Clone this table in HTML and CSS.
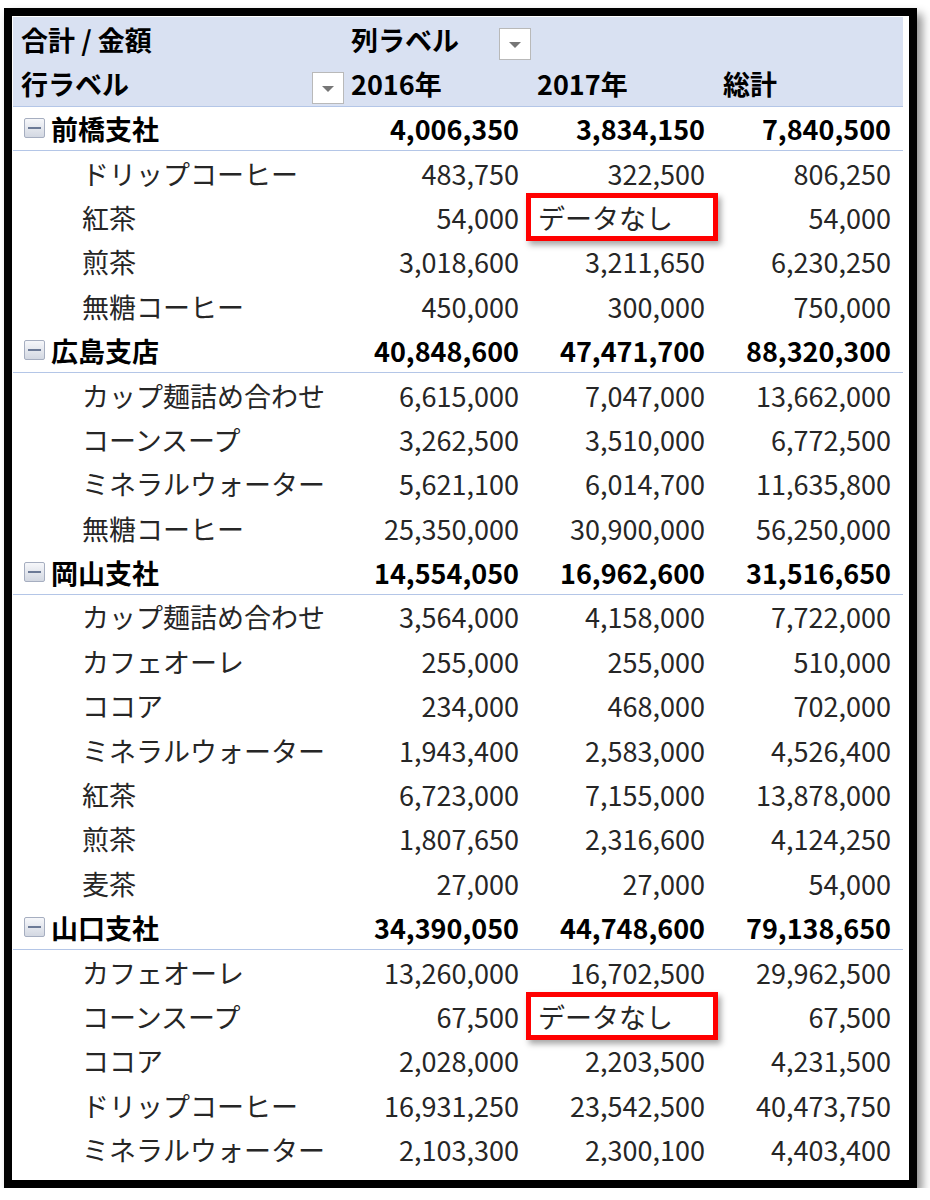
FILE: index.html
```html
<!DOCTYPE html>
<html lang="ja">
<head>
<meta charset="utf-8">
<title>ピボットテーブル</title>
<link rel="stylesheet" href="styles.css">
</head>
<body>
<div class="frame">
  <div class="pivot">
    <div class="row head">
      <div class="cell label hl">合計&nbsp;/&nbsp;金額</div>
      <div class="cell hl collabel">列ラベル<span class="dd"><i></i></span></div>
      <div class="cell"></div>
      <div class="cell"></div>
    </div>
    <div class="row head last-head">
      <div class="cell label hl rowlabel">行ラベル<span class="dd"><i></i></span></div>
      <div class="cell hl">2016年</div>
      <div class="cell hl">2017年</div>
      <div class="cell hl">総計</div>
    </div>

    <div class="row group">
      <div class="cell label"><span class="minus"></span>前橋支社</div>
      <div class="cell num">4,006,350</div><div class="cell num">3,834,150</div><div class="cell num">7,840,500</div>
    </div>
    <div class="row item"><div class="cell label">ドリップコーヒー</div><div class="cell num">483,750</div><div class="cell num">322,500</div><div class="cell num">806,250</div></div>
    <div class="row item"><div class="cell label">紅茶</div><div class="cell num">54,000</div><div class="cell nodata">データなし<span class="mark"></span></div><div class="cell num">54,000</div></div>
    <div class="row item"><div class="cell label">煎茶</div><div class="cell num">3,018,600</div><div class="cell num">3,211,650</div><div class="cell num">6,230,250</div></div>
    <div class="row item"><div class="cell label">無糖コーヒー</div><div class="cell num">450,000</div><div class="cell num">300,000</div><div class="cell num">750,000</div></div>

    <div class="row group">
      <div class="cell label"><span class="minus"></span>広島支店</div>
      <div class="cell num">40,848,600</div><div class="cell num">47,471,700</div><div class="cell num">88,320,300</div>
    </div>
    <div class="row item"><div class="cell label">カップ麺詰め合わせ</div><div class="cell num">6,615,000</div><div class="cell num">7,047,000</div><div class="cell num">13,662,000</div></div>
    <div class="row item"><div class="cell label">コーンスープ</div><div class="cell num">3,262,500</div><div class="cell num">3,510,000</div><div class="cell num">6,772,500</div></div>
    <div class="row item"><div class="cell label">ミネラルウォーター</div><div class="cell num">5,621,100</div><div class="cell num">6,014,700</div><div class="cell num">11,635,800</div></div>
    <div class="row item"><div class="cell label">無糖コーヒー</div><div class="cell num">25,350,000</div><div class="cell num">30,900,000</div><div class="cell num">56,250,000</div></div>

    <div class="row group">
      <div class="cell label"><span class="minus"></span>岡山支社</div>
      <div class="cell num">14,554,050</div><div class="cell num">16,962,600</div><div class="cell num">31,516,650</div>
    </div>
    <div class="row item"><div class="cell label">カップ麺詰め合わせ</div><div class="cell num">3,564,000</div><div class="cell num">4,158,000</div><div class="cell num">7,722,000</div></div>
    <div class="row item"><div class="cell label">カフェオーレ</div><div class="cell num">255,000</div><div class="cell num">255,000</div><div class="cell num">510,000</div></div>
    <div class="row item"><div class="cell label">ココア</div><div class="cell num">234,000</div><div class="cell num">468,000</div><div class="cell num">702,000</div></div>
    <div class="row item"><div class="cell label">ミネラルウォーター</div><div class="cell num">1,943,400</div><div class="cell num">2,583,000</div><div class="cell num">4,526,400</div></div>
    <div class="row item"><div class="cell label">紅茶</div><div class="cell num">6,723,000</div><div class="cell num">7,155,000</div><div class="cell num">13,878,000</div></div>
    <div class="row item"><div class="cell label">煎茶</div><div class="cell num">1,807,650</div><div class="cell num">2,316,600</div><div class="cell num">4,124,250</div></div>
    <div class="row item"><div class="cell label">麦茶</div><div class="cell num">27,000</div><div class="cell num">27,000</div><div class="cell num">54,000</div></div>

    <div class="row group">
      <div class="cell label"><span class="minus"></span>山口支社</div>
      <div class="cell num">34,390,050</div><div class="cell num">44,748,600</div><div class="cell num">79,138,650</div>
    </div>
    <div class="row item"><div class="cell label">カフェオーレ</div><div class="cell num">13,260,000</div><div class="cell num">16,702,500</div><div class="cell num">29,962,500</div></div>
    <div class="row item"><div class="cell label">コーンスープ</div><div class="cell num">67,500</div><div class="cell nodata">データなし<span class="mark"></span></div><div class="cell num">67,500</div></div>
    <div class="row item"><div class="cell label">ココア</div><div class="cell num">2,028,000</div><div class="cell num">2,203,500</div><div class="cell num">4,231,500</div></div>
    <div class="row item"><div class="cell label">ドリップコーヒー</div><div class="cell num">16,931,250</div><div class="cell num">23,542,500</div><div class="cell num">40,473,750</div></div>
    <div class="row item"><div class="cell label">ミネラルウォーター</div><div class="cell num">2,103,300</div><div class="cell num">2,300,100</div><div class="cell num">4,403,400</div></div>
  </div>
</div>
</body>
</html>
```

FILE: styles.css
```css
html, body {
  margin: 0;
  padding: 0;
  background: #ffffff;
}

body {
  font-family: "Noto Sans CJK JP", "Noto Sans", sans-serif;
  color: #262626;
}

.frame {
  margin: 8px 0 0 4px;
  width: 896px;
  height: 1163px;
  border: 8px solid #000;
  background: #fff;
  box-shadow: 5px 6px 9px rgba(0, 0, 0, 0.45);
  padding: 1px 0 0 1px;
  box-sizing: content-box;
}

.pivot {
  width: 890px;
}

.row {
  display: grid;
  grid-template-columns: 332px 186px 186px 186px;
  height: 44.4px;
  box-sizing: border-box;
  font-size: 27px;
  line-height: 1;
}

.row.head {
  height: 45px;
  background: #d9e1f2;
}

.row.last-head {
  border-bottom: 1px solid #b4c6e7;
}

.row.group {
  border-bottom: 1px solid #b4c6e7;
  font-weight: bold;
  color: #000;
}

.cell {
  position: relative;
  display: flex;
  align-items: center;
  padding: 0 12px 1px 6px;
  white-space: nowrap;
}

.cell.label {
  padding-left: 8px;
}

.row.item .cell.label {
  padding-left: 69px;
}

.row.group .cell.label {
  padding-left: 11px;
}

.hl {
  font-weight: bold;
  color: #000;
}

.num {
  justify-content: flex-end;
}

.nodata {
  padding-left: 7px;
}

.dd {
  position: absolute;
  right: 0;
  top: 11px;
  width: 30px;
  height: 30px;
  background: #fff;
  border: 1px solid #b9b9b9;
  display: flex;
  align-items: center;
  justify-content: center;
}

.rowlabel .dd {
  right: 1px;
  top: 10px;
}

.dd i {
  display: block;
  width: 0;
  height: 0;
  border-left: 6px solid transparent;
  border-right: 6px solid transparent;
  border-top: 6px solid #767676;
  margin-top: 2px;
}

.minus {
  display: inline-block;
  position: relative;
  width: 19px;
  height: 18px;
  margin-right: 6px;
  border: 1px solid #a6aec0;
  border-radius: 2px;
  background: linear-gradient(#f6f7fa, #d3d8e2);
  flex: none;
}

.minus::after {
  content: "";
  position: absolute;
  left: 3px;
  right: 3px;
  top: 8px;
  height: 2px;
  background: #6c7a96;
}

.mark {
  position: absolute;
  left: -5px;
  right: -1px;
  top: -3px;
  bottom: -1px;
  border: 5px solid #ff0000;
  box-shadow: 3px 4px 6px rgba(0, 0, 0, 0.35);
  pointer-events: none;
}
```
